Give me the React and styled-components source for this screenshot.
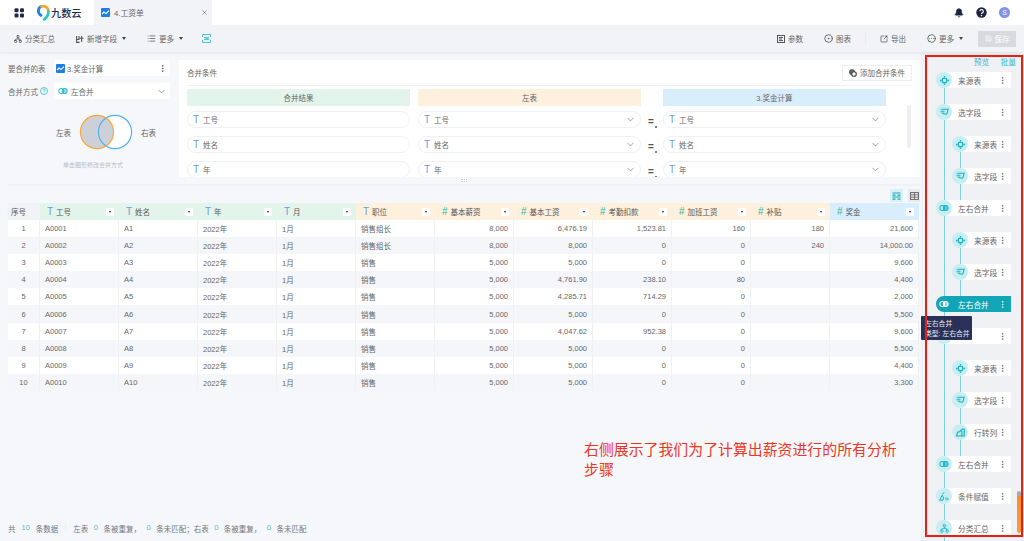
import React from 'react';
import styled, { createGlobalStyle } from 'styled-components';
import { Bell, ChevronDown, CircleDot, CircleEllipsis, EllipsisVertical, List, Network, Save, SquareArrowOutUpRight, X } from 'lucide-react';

const Global = createGlobalStyle`
  html, body { margin: 0; padding: 0; background: #f6f7fa; }
  * { box-sizing: border-box; }
  body { font-family: "Liberation Sans", "Noto Sans CJK SC", sans-serif; font-size: 7.5px; color: #666; }
`;

const Page = styled.div`
  position: relative; width: 1024px; height: 541px; overflow: hidden;
  display: flex; flex-direction: column; background: #f6f7fa;
`;
const TopBar = styled.header`
  height: 25px; flex: none; display: flex; align-items: center; background: #fff;
`;
const Brand = styled.div`
  width: 94px; display: flex; align-items: center; padding-left: 14px;
`;
const BrandName = styled.span`
  font-size: 10.2px; font-weight: 500; color: #1f2b4a;
`;
const Tab = styled.div`
  width: 118px; height: 25px; display: flex; align-items: center; padding: 0 4px 0 7px; gap: 3px;
  background: #f2f3f6; font-size: 7.8px; color: #666;
`;
const TabTitle = styled.span`
  margin-left: 1px;
`;
const TabClose = styled.span`
  margin-left: auto; display: flex; color: #444;
`;
const TopRight = styled.div`
  margin-left: auto; display: flex; align-items: center; gap: 12px; padding-right: 14px; color: #1c2440;
`;
const Avatar = styled.span`
  width: 11px; height: 11px; border-radius: 50%; background: #7d93ea; color: #fff;
  font-size: 7px; display: flex; align-items: center; justify-content: center;
`;
const Toolbar = styled.div`
  position: relative; z-index: 2; height: 27px; flex: none; display: flex; align-items: center;
  justify-content: space-between; background: #f1f3f6; padding: 0 8px 0 14px;
  box-shadow: 0 2px 3px rgba(90, 100, 130, 0.08);
`;
const ToolGroup = styled.div`
  display: flex; align-items: center; gap: 21px;
`;
const ToolItem = styled.span`
  display: flex; align-items: center; gap: 3px; color: #666; white-space: nowrap;
`;
const Caret = styled.i`
  width: 0; height: 0; margin-left: 2px; border-left: 2px solid transparent; border-right: 2px solid transparent;
  border-top: 3px solid #444;
`;
const ToolSep = styled.i`
  width: 1px; height: 12px; background: #e9ebef; margin: 0 -7px;
`;
const MergeBox = styled.span`
  display: flex; margin-left: -2px;
`;
const SaveButton = styled.span`
  width: 38px; height: 16px; margin-left: -6px; display: flex; align-items: center; justify-content: center; gap: 3px;
  background: #d8dade; color: #fff;
`;
const Main = styled.div`
  flex: 1; min-height: 0; display: flex;
`;
const Content = styled.main`
  width: 921px; flex: none; display: flex; flex-direction: column;
`;
const Config = styled.section`
  display: flex; height: 125px; padding-top: 8px; flex: none;
`;
const Side = styled.div`
  width: 179px; flex: none; padding: 0 9px 0 8px; display: flex; flex-direction: column; gap: 7px;
`;
const SideRow = styled.div`
  display: flex; align-items: center; height: 16px;
`;
const SideLabel = styled.span`
  width: 46px; flex: none; display: flex; align-items: center; gap: 2px; color: #666;
`;
const SideBox = styled.div`
  flex: 1; height: 16px; display: flex; align-items: center; gap: 2px; padding: 0 3px 0 2px;
  background: #fff; color: #666;
`;
const SideGlyph = styled.span`
  color: #2fbfc9; display: flex; margin: 0 1px 0 2px;
`;
const Push = styled.span`
  margin-left: auto; display: flex; color: #555;
`;
const Venn = styled.div`
  display: flex; align-items: center; margin-top: 8px; padding-left: 48px; gap: 7px; height: 36px;
`;
const Hint = styled.div`
  margin-top: 3px; text-align: center; padding-left: 8px; font-size: 6px; color: #b9bcc4;
`;
const Panel = styled.div`
  position: relative; width: 741px; height: 117px; background: #fff; overflow: hidden; padding: 0 8px;
`;
const PanelHead = styled.div`
  height: 26px; display: flex; align-items: center; justify-content: space-between;
  border-bottom: 1px solid #eef0f5;
`;
const AddButton = styled.span`
  width: 70px; height: 16px; display: flex; align-items: center; justify-content: center; gap: 3px;
  border: 1px solid #eceef2; color: #666;
`;
const CondGrid = styled.div`
  display: grid; grid-template-columns: 223px 231px 22px 223px; padding-top: 3px;
  grid-auto-rows: 25px;
`;
const CondHead = styled.div`
  height: 17px; width: 223px; display: flex; align-items: center; justify-content: center; color: #666;
  background: ${p => p.$bg}; margin-left: ${p => p.$ml || 0}px;
`;
const Pill = styled.div`
  height: 17px; width: 223px; margin-top: -3px; margin-left: ${p => p.$ml || 0}px;
  display: flex; align-items: center; gap: 4px; padding: 0 4px 0 5px;
  border: 1px solid #eef0f4; border-radius: 9px; color: #666; background: #fff;
`;
const TGlyph = styled.b`
  font-weight: 400; font-size: 10px; color: ${p => p.$c || '#6f9be6'}; line-height: 1;
`;
const Equal = styled.div`
  position: relative; font-size: 10px; font-weight: 700; color: #555; padding: 3px 0 0 7px; line-height: 1;
  &::after { content: ''; position: absolute; left: 14px; top: 12px; width: 2px; height: 2px; background: #555; border-radius: 50%; }
`;
const Scrollbar = styled.i`
  position: absolute; left: 728px; top: 45px; width: 4px; height: 43px; background: #eeeff2; border-radius: 2px;
`;
const TableTools = styled.div`
  margin: 7px 0 0 8px; padding-top: 3px; height: 19px; border-top: 2px solid #f0f1f4;
  display: flex; justify-content: flex-end; gap: 5px; padding-right: 1px;
`;
const ViewBtn = styled.span`
  width: ${p => (p.$on ? 13 : 12)}px; height: 13px; display: flex; align-items: center; justify-content: center;
  background: ${p => (p.$on ? '#d8f1f5' : '#e8eaee')}; color: ${p => (p.$on ? '#18a9bb' : '#666')};
`;
const Table = styled.div`
  margin: 0 2px 0 8px;
`;
const Row = styled.div`
  display: grid; grid-template-columns: 32px repeat(10, 79px) 89px; height: ${p => (p.$head ? 17 : 17.1)}px;
  background: ${p => (p.$alt ? '#f5f6f9' : '#fff')};
`;
const HeadCell = styled.div`
  display: flex; align-items: center; gap: 3px; padding: 0 5px 0 ${p => (p.$plain ? 3 : 7)}px; color: #555;
  background: ${p => p.$bg};
`;
const HeadMenu = styled.span`
  margin-left: auto; width: 8px; height: 8px; background: #fff; display: flex; align-items: center; justify-content: center;
  &::after { content: ''; border-left: 1.5px solid transparent; border-right: 1.5px solid transparent; border-top: 2px solid #222; }
`;
const Cell = styled.div`
  display: flex; align-items: center; padding: 0 5px; color: #666; border-right: 1px solid #f0f1f4;
  justify-content: ${p => (p.$align === 'right' ? 'flex-end' : p.$align === 'center' ? 'center' : 'flex-start')};
`;
const Footer = styled.footer`
  margin-top: auto; height: 18px; padding-left: 8px; color: #777; white-space: nowrap;
  display: flex; align-items: flex-start;
`;
const Num = styled.span`
  color: #4cbccb; margin: 0 ${p => p.$m || 5.5}px;
`;
const FootSep = styled.i`
  width: 1px; height: 8px; margin: 0 7px; background: #eceef1;
`;
const Rail = styled.aside`
  position: relative; flex: 1; background: #f0f1f5; padding: 4px 13px 0 15px; overflow: hidden;
`;
const RailHead = styled.div`
  height: 16px; display: flex; justify-content: flex-end; gap: 11px; margin-right: -5px; color: #3fb8c8; font-size: 7.8px;
`;
const Steps = styled.div`
  position: relative; display: flex; flex-direction: column; gap: 16px;
  &::before { content: ''; position: absolute; left: 8px; top: 8px; bottom: -40px; width: 1px; background: #7fd3dc; }
`;
const Step = styled.div`
  position: relative; height: 16px; margin-left: ${p => (p.$nested ? 16 : 0)}px;
  display: flex; align-items: center; border-radius: 8px 0 0 8px;
  background: linear-gradient(to right, transparent 8px, ${p => (p.$active ? '#12a5b5' : '#fff')} 8px);
  ${p => p.$active && 'background: #12a5b5;'}
  ${p => p.$nested && `&::after { content: ''; position: absolute; left: 8px; top: 16px; width: 1px; height: 16px; background: #7fd3dc; }`}
`;
const StepIcon = styled.span`
  position: relative; z-index: 1; width: 16px; height: 16px; flex: none; border-radius: 50%;
  background: ${p => (p.$active ? 'transparent' : '#c9eef2')};
  color: ${p => (p.$active ? '#fff' : '#17b2c4')};
  display: flex; align-items: center; justify-content: center;
`;
const StepLabel = styled.span`
  margin-left: 6px; font-size: 7.7px; color: ${p => (p.$active ? '#fff' : '#666')}; white-space: nowrap;
`;
const StepMenu = styled.span`
  margin-left: auto; margin-right: 4px; display: flex; color: ${p => (p.$active ? '#fff' : '#666')};
`;
const Tooltip = styled.div`
  position: absolute; left: 921px; top: 316px; width: 51px; height: 24px; z-index: 5; padding: 3px 0 0 4px;
  background: #2a3158; color: #e8e9f0; font-size: 6.8px; line-height: 9.5px; border-radius: 1px; white-space: nowrap;
`;
const RedFrame = styled.div`
  position: absolute; left: 925px; top: 55px; width: 98px; height: 482px; z-index: 6; border: 2px solid #f01c10; pointer-events: none;
`;
const RailThumb = styled.i`
  position: absolute; left: 1017px; top: 491px; width: 4px; height: 42px; z-index: 4; border-radius: 2px;
  background: linear-gradient(to bottom, #a9a9a9 0 5px, #f98c2f 5px, #fb9a45);
`;
const Note = styled.div`
  position: absolute; left: 584px; top: 440px; width: 316px; z-index: 4; font-size: 14.9px; line-height: 20px; color: #ef3524;
`;
const Handle = styled.i`
  position: absolute; left: 461px; top: 179px; width: 6px; height: 3px; border-top: 1px dotted #cfd2d8; border-bottom: 1px dotted #cfd2d8;
`;

const AppsIcon = () => (
  <svg width="11" height="10" viewBox="0 0 11 10" fill="#1f2b4a">
    <rect x="0.5" y="0.2" width="4" height="4" rx="1.2" /><rect x="6" y="0.2" width="4" height="4" rx="1.2" />
    <rect x="0.5" y="5.4" width="4" height="4" rx="1" /><rect x="6" y="5.4" width="4" height="4" rx="1" />
  </svg>
);
const LogoMark = () => (
  <svg width="15" height="16" viewBox="0 0 15 16" fill="none" strokeWidth="2.8" strokeLinecap="round" style={{ marginLeft: 11 }}>
    <path d="M5 1.6A5 5 0 0 0 5 10.4" stroke="#2b7fe0" />
    <path d="M5.6 1.5A5 5 0 0 1 12.4 6.4" stroke="#f6a62c" />
    <path d="M12.4 6.8C12.2 10 10.6 12.6 8.2 14.4" stroke="#2cc9c0" />
  </svg>
);
const WaveIcon = ({ s = 9 }) => (
  <svg width={s} height={s} viewBox="0 0 9 9" style={{ flex: 'none' }}>
    <rect width="9" height="9" rx="1" fill="#1e7ee6" />
    <path d="M1 6L3 4l2 1.6L8 2.6" stroke="#fff" strokeWidth="1.1" fill="none" />
  </svg>
);
const HelpIcon = () => (
  <svg width="11" height="11" viewBox="0 0 11 11">
    <circle cx="5.5" cy="5.5" r="5.2" fill="#1c2440" />
    <path d="M3.9 4.3a1.7 1.7 0 1 1 2.6 1.4c-.6.4-1 .7-1 1.3" stroke="#fff" strokeWidth="1.1" fill="none" />
    <circle cx="5.5" cy="8.5" r=".7" fill="#fff" />
  </svg>
);
const AddFieldIcon = () => (
  <svg width="8" height="8" viewBox="0 0 8 8" fill="none" stroke="#555" strokeWidth="1.1">
    <path d="M.6 1v6.4h3M3 1v3.5H.6M5.6 1v6M3.8 3.2h3.8" />
  </svg>
);
const MergeBoxIcon = () => (
  <svg width="9" height="9" viewBox="0 0 9 9" fill="none" stroke="#4cc3d3" strokeWidth="1">
    <path d="M.5 3V.5h8V3M.5 6v2.5h8V6M2 3.6h5L2 5.6h5" />
  </svg>
);
const ParamIcon = () => (
  <svg width="8" height="8" viewBox="0 0 8 8" fill="none" stroke="#555" strokeWidth="1">
    <rect x=".5" y=".5" width="7" height="7" /><path d="M2 2.5h4M2 4h3M2 5.6h4" />
  </svg>
);
const AddCondIcon = () => (
  <svg width="8" height="8" viewBox="0 0 8 8" fill="none" stroke="#444" strokeWidth="1.1">
    <circle cx="3" cy="3" r="2.3" fill="#777" /><circle cx="5" cy="5" r="2.3" fill="#fff" />
  </svg>
);
const HelpOutline = () => (
  <svg width="8" height="8" viewBox="0 0 8 8" fill="none" stroke="#3fb8c8" strokeWidth=".8">
    <circle cx="4" cy="4" r="3.5" /><path d="M2.9 3.2A1.1 1.1 0 1 1 4.6 4.1C4.2 4.3 4 4.6 4 5M4 5.7v.7" />
  </svg>
);
const MergeIcon = ({ size = 10 }) => (
  <svg width={size} height={size * 0.6} viewBox="0 0 10 6" fill="none" stroke="currentColor" strokeWidth="1.1">
    <circle cx="3.3" cy="3" r="2.5" /><circle cx="6.7" cy="3" r="2.5" fill="currentColor" fillOpacity=".5" />
  </svg>
);
const SourceIcon = () => (
  <svg width="9" height="9" viewBox="0 0 9 9" fill="none" stroke="currentColor" strokeWidth="1.3">
    <circle cx="4.5" cy="4.5" r="2.4" /><path d="M4.5 0v1.4M4.5 7.6V9M0 4.5h1.4M7.6 4.5H9" />
  </svg>
);
const FieldIcon = () => (
  <svg width="9" height="8" viewBox="0 0 9 8" fill="none" stroke="currentColor" strokeWidth="1.1">
    <path d="M.6 1.2h7.6L6.8 6H3.2M.6 3.2h4M1.4 5h2.8" />
  </svg>
);
const PivotIcon = () => (
  <svg width="9" height="9" viewBox="0 0 9 9" fill="none" stroke="currentColor" strokeWidth="1.2">
    <path d="M.6 8h7.6V1H6.4L3.4 4H1.6zM5.8 3v5" />
  </svg>
);
const CondIcon = () => (
  <svg width="10" height="9" viewBox="0 0 10 9" fill="none" stroke="currentColor" strokeWidth="1">
    <path d="M.6 8.2l2.6-5 1.4 2.6L4 8.2zM3.6 2.4l1.4-2M7 5.4v2.8M8.8 5.8v2.4" />
  </svg>
);
const ViewListIcon = () => (
  <svg width="9" height="8" viewBox="0 0 9 8" fill="none" stroke="currentColor" strokeWidth="1.2">
    <path d="M.5 1h8M.5 3.2h3M5.5 3.2h3M.5 5h8M.5 7.2h3M5.5 7.2h3" />
  </svg>
);
const ViewGridIcon = () => (
  <svg width="9" height="8" viewBox="0 0 9 8" fill="none" stroke="currentColor" strokeWidth=".9">
    <rect x=".5" y=".5" width="8" height="7" /><path d="M.5 2.8h8M.5 5.2h8M4.5.5v7" />
  </svg>
);

const stepIcons = { source: SourceIcon, field: FieldIcon, merge: MergeIcon, pivot: PivotIcon, cond: CondIcon };
const steps = [
  { label: '来源表', icon: 'source' },
  { label: '选字段', icon: 'field' },
  { label: '来源表', icon: 'source', nested: true },
  { label: '选字段', icon: 'field', nested: true },
  { label: '左右合并', icon: 'merge' },
  { label: '来源表', icon: 'source', nested: true },
  { label: '选字段', icon: 'field', nested: true },
  { label: '左右合并', icon: 'merge', active: true },
  { label: '', icon: 'merge' },
  { label: '来源表', icon: 'source', nested: true },
  { label: '选字段', icon: 'field', nested: true },
  { label: '行转列', icon: 'pivot', nested: true },
  { label: '左右合并', icon: 'merge' },
  { label: '条件赋值', icon: 'cond' },
  { label: '分类汇总', icon: 'group' },
];

const GREEN = '#e3f4ea', ORANGE = '#fdf0dd', BLUE = '#d9eefc';
const columns = [
  { name: '工号', t: 'T', bg: GREEN }, { name: '姓名', t: 'T', bg: GREEN }, { name: '年', t: 'T', bg: GREEN },
  { name: '月', t: 'T', bg: GREEN }, { name: '职位', t: 'T', bg: ORANGE }, { name: '基本薪资', t: '#', bg: ORANGE },
  { name: '基本工资', t: '#', bg: ORANGE }, { name: '考勤扣款', t: '#', bg: ORANGE }, { name: '加班工资', t: '#', bg: ORANGE },
  { name: '补贴', t: '#', bg: ORANGE }, { name: '奖金', t: '#', bg: BLUE },
];
const rows = [
  ['销售组长', '8,000', '6,476.19', '1,523.81', '160', '180', '21,600'],
  ['销售组长', '8,000', '8,000', '0', '0', '240', '14,000.00'],
  ['销售', '5,000', '5,000', '0', '0', '', '9,600'],
  ['销售', '5,000', '4,761.90', '238.10', '80', '', '4,400'],
  ['销售', '5,000', '4,285.71', '714.29', '0', '', '2,000'],
  ['销售', '5,000', '5,000', '0', '0', '', '5,500'],
  ['销售', '5,000', '4,047.62', '952.38', '0', '', '9,600'],
  ['销售', '5,000', '5,000', '0', '0', '', '5,500'],
  ['销售', '5,000', '5,000', '0', '0', '', '4,400'],
  ['销售', '5,000', '5,000', '0', '0', '', '3,300'],
];
const conds = ['工号', '姓名', '年'];
const chev = <Push><ChevronDown size={11} strokeWidth={1.2} /></Push>;

export default function App() {
  return (
    <Page>
      <Global />
      <TopBar>
        <Brand>
          <AppsIcon />
          <LogoMark />
          <BrandName>九数云</BrandName>
        </Brand>
        <Tab>
          <WaveIcon />
          <TabTitle>4.工资单</TabTitle>
          <TabClose><X size={7} strokeWidth={1.6} /></TabClose>
        </Tab>
        <TopRight>
          <Bell size={10} fill="currentColor" />
          <HelpIcon />
          <Avatar>S</Avatar>
        </TopRight>
      </TopBar>
      <Toolbar>
        <ToolGroup>
          <ToolItem><Network size={8} color="#444" />分类汇总</ToolItem>
          <ToolItem><AddFieldIcon />新增字段<Caret /></ToolItem>
          <ToolItem><List size={9} color="#555" />更多<Caret /></ToolItem>
          <MergeBox><MergeBoxIcon /></MergeBox>
        </ToolGroup>
        <ToolGroup>
          <ToolItem><ParamIcon />参数</ToolItem>
          <ToolItem><CircleDot size={9} color="#444" />图表</ToolItem>
          <ToolSep />
          <ToolItem><SquareArrowOutUpRight size={8} color="#444" />导出</ToolItem>
          <ToolItem><CircleEllipsis size={9} color="#444" />更多<Caret /></ToolItem>
          <SaveButton><Save size={7} />保存</SaveButton>
        </ToolGroup>
      </Toolbar>
      <Main>
        <Content>
          <Config>
            <Side>
              <SideRow>
                <SideLabel>要合并的表</SideLabel>
                <SideBox><WaveIcon />3.奖金计算<Push><EllipsisVertical size={9} /></Push></SideBox>
              </SideRow>
              <SideRow>
                <SideLabel>合并方式 <HelpOutline /></SideLabel>
                <SideBox><SideGlyph><MergeIcon /></SideGlyph>左合并{chev}</SideBox>
              </SideRow>
              <Venn>
                <span>左表</span>
                <svg width="56" height="36" viewBox="0 0 56 36">
                  <circle cx="37" cy="18" r="16.6" fill="#fff" />
                  <circle cx="19" cy="18" r="16.6" fill="#cdd0d7" />
                  <circle cx="37" cy="18" r="16.6" fill="none" stroke="#4fb2f6" strokeWidth="1.2" />
                  <circle cx="19" cy="18" r="16.6" fill="none" stroke="#f8a93c" strokeWidth="1.2" />
                </svg>
                <span>右表</span>
              </Venn>
              <Hint>单击图形修改合并方式</Hint>
            </Side>
            <Panel>
              <PanelHead>
                <span>合并条件</span>
                <AddButton><AddCondIcon />添加合并条件</AddButton>
              </PanelHead>
              <CondGrid>
                <CondHead $bg="#e3f4ea">合并结果</CondHead>
                <CondHead $bg="#fdf0dd" $ml={8}>左表</CondHead>
                <span />
                <CondHead $bg="#d9eefc">3.奖金计算</CondHead>
                {conds.map(c => (
                  <React.Fragment key={c}>
                    <Pill><TGlyph>T</TGlyph>{c}</Pill>
                    <Pill $ml={8}><TGlyph>T</TGlyph>{c}{chev}</Pill>
                    <Equal>=</Equal>
                    <Pill><TGlyph>T</TGlyph>{c}{chev}</Pill>
                  </React.Fragment>
                ))}
              </CondGrid>
              <Scrollbar />
            </Panel>
          </Config>
          <TableTools>
            <ViewBtn $on><ViewListIcon /></ViewBtn>
            <ViewBtn><ViewGridIcon /></ViewBtn>
          </TableTools>
          <Table>
            <Row $head>
              <HeadCell $plain $bg="#f2f3f6">序号</HeadCell>
              {columns.map(c => (
                <HeadCell key={c.name} $bg={c.bg}>
                  <TGlyph $c={c.t === '#' ? '#2fb5a0' : '#6f9be6'}>{c.t}</TGlyph>{c.name}<HeadMenu />
                </HeadCell>
              ))}
            </Row>
            {rows.map((r, i) => (
              <Row key={i} $alt={i % 2 === 1}>
                <Cell $align="center">{i + 1}</Cell>
                <Cell>A{String(i + 1).padStart(4, '0')}</Cell>
                <Cell>A{i + 1}</Cell>
                <Cell>2022年</Cell>
                <Cell>1月</Cell>
                <Cell>{r[0]}</Cell>
                {r.slice(1).map((v, j) => <Cell key={j} $align="right">{v}</Cell>)}
              </Row>
            ))}
          </Table>
          <Footer>
            共<Num $m={6}>10</Num>条数据<FootSep />左表<Num>0</Num>条被重复，<Num>0</Num>条未匹配；右表<Num>0</Num>条被重复，<Num>0</Num>条未匹配
          </Footer>
        </Content>
        <Rail>
          <RailHead><span>预览</span><span>批量</span></RailHead>
          <Steps>
            {steps.map((s, i) => {
              const Icon = stepIcons[s.icon];
              return (
                <Step key={i} $nested={s.nested} $active={s.active}>
                  <StepIcon $active={s.active}>{Icon ? <Icon /> : <Network size={9} strokeWidth={2} />}</StepIcon>
                  <StepLabel $active={s.active}>{s.label}</StepLabel>
                  <StepMenu $active={s.active}><EllipsisVertical size={9} /></StepMenu>
                </Step>
              );
            })}
          </Steps>
        </Rail>
      </Main>
      <Handle />
      <Tooltip>左右合并<br />类型: 左右合并</Tooltip>
      <RailThumb />
      <RedFrame />
      <Note>右侧展示了我们为了计算出薪资进行的所有分析步骤</Note>
    </Page>
  );
}
